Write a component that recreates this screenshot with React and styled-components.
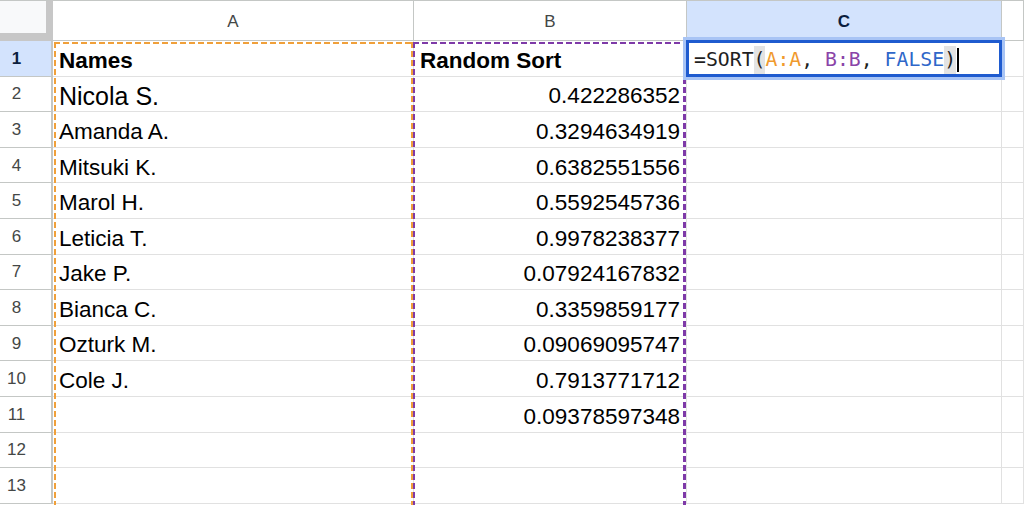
import React from 'react'
import styled, { createGlobalStyle, css } from 'styled-components'

const GlobalStyle = createGlobalStyle`
  html, body {
    margin: 0;
    padding: 0;
    background: #fff;
    overflow: hidden;
  }
  body {
    font-family: "Liberation Sans", Arial, sans-serif;
  }
`

const COLS = ['A', 'B', 'C']

const rows = [
  { name: 'Names', value: 'Random Sort', head: true },
  { name: 'Nicola S.', value: '0.422286352', big: true },
  { name: 'Amanda A.', value: '0.3294634919' },
  { name: 'Mitsuki K.', value: '0.6382551556' },
  { name: 'Marol H.', value: '0.5592545736' },
  { name: 'Leticia T.', value: '0.9978238377' },
  { name: 'Jake P.', value: '0.07924167832' },
  { name: 'Bianca C.', value: '0.3359859177' },
  { name: 'Ozturk M.', value: '0.09069095747' },
  { name: 'Cole J.', value: '0.7913771712' },
  { name: '', value: '0.09378597348' },
  { name: '', value: '' },
  { name: '', value: '' },
]

export default function App() {
  return (
    <>
      <GlobalStyle />
      <Sheet>
        <Grid>
          <Corner />
          {COLS.map(c => (
            <ColHead key={c} $active={c === 'C'}>
              {c}
            </ColHead>
          ))}
          <ColHead />
          {rows.map((r, i) => (
            <React.Fragment key={i}>
              <RowHead $active={i === 0}>{i + 1}</RowHead>
              <Cell $bold={r.head} $big={r.big}>
                {r.name}
              </Cell>
              <Cell $bold={r.head} $num={!r.head}>
                {r.value}
              </Cell>
              <Cell />
              <Cell />
            </React.Fragment>
          ))}
        </Grid>

        <RangeA />
        <RangeB />

        <Editor>
          <EditorInner>
            <Tok>=SORT</Tok>
            <Paren>(</Paren>
            <Tok $c="#f09a2e">A:A</Tok>
            <Tok>, </Tok>
            <Tok $c="#8a44a8">B:B</Tok>
            <Tok>, </Tok>
            <Tok $c="#2f67c9">FALSE</Tok>
            <Paren>)</Paren>
            <Caret />
          </EditorInner>
        </Editor>
      </Sheet>
    </>
  )
}

const Sheet = styled.div`
  position: relative;
  width: 1024px;
  height: 505px;
  overflow: hidden;
  background: #fff;
`

const Grid = styled.div`
  display: grid;
  grid-template-columns: 53px 361px 273px 315px 1fr;
  grid-template-rows: 41px repeat(13, 35.6px);
`

const Corner = styled.div`
  box-sizing: border-box;
  background: #f8f9fa;
  border-top: 1px solid #c4c7c5;
  border-right: 7px solid #c7c7c7;
  border-bottom: 8px solid #c7c7c7;
`

const ColHead = styled.div`
  box-sizing: border-box;
  display: flex;
  align-items: center;
  justify-content: center;
  padding-top: 3px;
  font-size: 17px;
  color: #444746;
  background: #fff;
  border-top: 1px solid #c4c7c5;
  border-right: 1px solid #c4c7c5;
  border-bottom: 1px solid #c4c7c5;

  ${p =>
    p.$active &&
    css`
      background: #d3e3fd;
      color: #0b1e3f;
      font-weight: 700;
    `}
`

const RowHead = styled.div`
  box-sizing: border-box;
  display: flex;
  align-items: center;
  justify-content: center;
  padding-right: 18px;
  padding-top: 1px;
  font-size: 17px;
  color: #444746;
  background: #fff;
  border-right: 2px solid #c4c7c5;
  border-bottom: 1px solid #c4c7c5;

  ${p =>
    p.$active &&
    css`
      background: #d3e3fd;
      color: #0b1e3f;
      font-weight: 700;
    `}
`

const Cell = styled.div`
  box-sizing: border-box;
  display: flex;
  align-items: flex-end;
  justify-content: ${p => (p.$num ? 'flex-end' : 'flex-start')};
  padding: 0 6px ${p => (p.$big ? '0' : '2px')} 6px;
  font-size: ${p => (p.$big ? '25px' : '22.5px')};
  font-weight: ${p => (p.$bold ? 700 : 400)};
  line-height: 1.15;
  color: #000;
  white-space: nowrap;
  border-right: 1px solid #e1e1e1;
  border-bottom: 1px solid #e1e1e1;
`

const dashed = (color, right = 2) => css`
  background:
    repeating-linear-gradient(90deg, ${color} 0 6px, transparent 6px 9px) left top / 100% 2px no-repeat,
    repeating-linear-gradient(180deg, ${color} 0 6px, transparent 6px 9px) left top / 2px 100% no-repeat,
    repeating-linear-gradient(180deg, ${color} 0 6px, transparent 6px 9px) right top / ${right}px 100% no-repeat;
`

const RangeA = styled.div`
  position: absolute;
  left: 54px;
  top: 42px;
  width: 359px;
  bottom: 0;
  pointer-events: none;
  ${dashed('#f0a03a')}
`

const RangeB = styled.div`
  position: absolute;
  left: 413px;
  top: 42px;
  width: 273px;
  bottom: 0;
  pointer-events: none;
  ${dashed('#7e3aa8', 3)}
`

const Editor = styled.div`
  position: absolute;
  left: 683px;
  top: 37px;
  width: 322px;
  height: 43px;
  box-sizing: border-box;
  border: 3px solid #a8c4f5;
`

const EditorInner = styled.div`
  box-sizing: border-box;
  height: 100%;
  display: flex;
  align-items: center;
  padding: 2px 0 0 5px;
  background: #fff;
  border: 3px solid #1f5bcf;
  font-family: "DejaVu Sans Mono", "Liberation Mono", monospace;
  font-size: 19.8px;
  color: #1f1f1f;
  white-space: pre;
`

const Tok = styled.span`
  color: ${p => p.$c || '#1f1f1f'};
`

const Paren = styled.span`
  background: #e3e3e3;
  line-height: 28px;
`

const Caret = styled.span`
  display: inline-block;
  width: 2px;
  height: 24px;
  margin-left: 1px;
  background: #000;
`
